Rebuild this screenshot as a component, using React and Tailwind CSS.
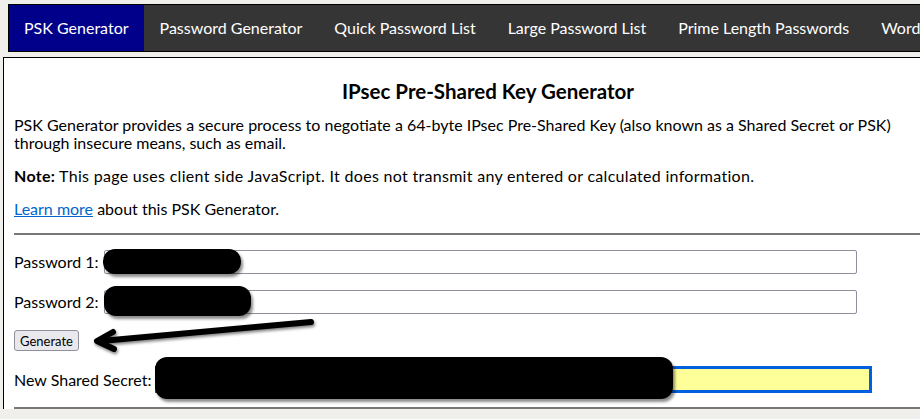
import React from 'react';

const navItems = [
  'PSK Generator',
  'Password Generator',
  'Quick Password List',
  'Large Password List',
  'Prime Length Passwords',
  'Word Passwords',
];

function Redact({ className }) {
  return (
    <div
      className={`absolute bg-black rounded-[12px] shadow-[2px_3px_3px_rgba(0,0,0,0.45)] ${className}`}
    />
  );
}

export default function App() {
  return (
    <div
      className="w-[920px] h-[419px] overflow-hidden bg-[#f0efeb] relative"
      style={{ fontFamily: 'Lato, "Noto Sans", sans-serif' }}
    >
      {/* Nav */}
      <div className="pt-[4px] pl-[8px]">
        <nav className="flex h-[48px] w-[1000px] bg-[#353535] border border-black text-white text-[16px] whitespace-nowrap">
          {navItems.map((item, i) => (
            <div
              key={item}
              className={`flex items-center ${i === 0 ? 'bg-[#00008b] px-[15px]' : 'px-[16px]'}`}
            >
              {item}
            </div>
          ))}
        </nav>
      </div>

      {/* Main box */}
      <div className="ml-[3px] mt-[5px] w-[1000px] bg-white border-l border-t border-black text-black text-[16px] leading-[18px] pl-[10px] relative">
        <h1 className="w-[948px] text-center font-bold text-[20.5px] leading-[20px] pt-[23px] pb-[15px]">
          IPsec Pre-Shared Key Generator
        </h1>
        <p className="w-[900px] mb-[15px]">
          PSK Generator provides a secure process to negotiate a 64-byte IPsec Pre-Shared Key (also known as a Shared Secret or PSK) through insecure means, such as email.
        </p>
        <p className="mb-[15px] tracking-[0.3px]">
          <b>Note:</b> This page uses client side JavaScript. It does not transmit any entered or calculated information.
        </p>
        <p className="mb-[15px]">
          <a href="#" className="text-[#0066cc] underline">Learn more</a> about this PSK Generator.
        </p>
        <hr className="border-0 border-t-2 border-[#777] mb-[15px]" />

        <div className="flex items-center h-[24px] mb-[16px]">
          <span className="w-[90px]">Password 1:</span>
          <input className="w-[753px] h-[24px] border border-[#8f8f9d] rounded-[2px] bg-white" />
        </div>
        <div className="flex items-center h-[24px] mb-[16px]">
          <span className="w-[90px]">Password 2:</span>
          <input className="w-[753px] h-[24px] border border-[#8f8f9d] rounded-[2px] bg-white" />
        </div>
        <button className="h-[21px] px-[5px] text-[13px] bg-[#e9e9ed] border border-[#8f8f9d] rounded-[3px] mb-[15px]">
          Generate
        </button>
        <div className="flex items-center h-[27px] mb-[14px]">
          <span className="w-[141px] whitespace-nowrap">New Shared Secret:</span>
          <input className="w-[717px] h-[27px] border-[3px] border-[#0060df] bg-[#ffff99] outline-none" />
        </div>
        <hr className="border-0 border-t-2 border-[#777]" />
      </div>

      {/* Redactions */}
      <Redact className="left-[103px] top-[249px] w-[138px] h-[25px]" />
      <Redact className="left-[104px] top-[286px] w-[147px] h-[30px]" />
      <Redact className="left-[155px] top-[357px] w-[518px] h-[42px]" />

      {/* Arrow annotation */}
      <svg className="absolute left-0 top-0" width="920" height="419" style={{ pointerEvents: 'none' }}>
        <defs>
          <filter id="sh" x="-10%" y="-50%" width="120%" height="200%">
            <feDropShadow dx="1" dy="2" stdDeviation="1.5" floodColor="#000" floodOpacity="0.5" />
          </filter>
        </defs>
        <g filter="url(#sh)" stroke="#000" strokeLinecap="round" strokeLinejoin="round" fill="none">
          <line x1="311" y1="322" x2="101" y2="341" strokeWidth="6" />
          <path d="M113 332 L97 341 L114 349" strokeWidth="6" />
        </g>
      </svg>
    </div>
  );
}
